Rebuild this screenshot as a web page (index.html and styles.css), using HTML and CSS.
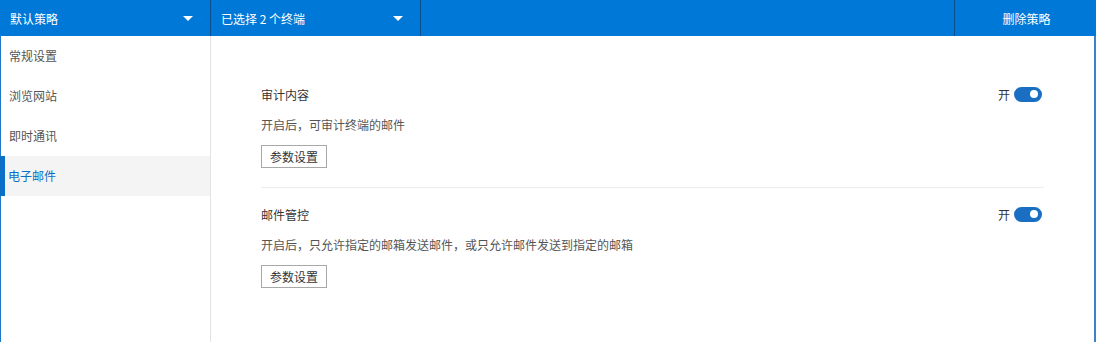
FILE: index.html
```html
<!DOCTYPE html>
<html lang="zh">
<head>
<meta charset="utf-8">
<link rel="stylesheet" href="styles.css">
</head>
<body>
<div class="app">
  <div class="topbar">
    <div class="seg seg-policy"><span>默认策略</span><i class="caret"></i></div>
    <div class="seg seg-terminal"><span>已选择 2 个终端</span><i class="caret"></i></div>
    <div class="spacer"></div>
    <div class="seg seg-delete">删除策略</div>
  </div>
  <div class="main">
    <ul class="sidebar">
      <li class="nav-item">常规设置</li>
      <li class="nav-item">浏览网站</li>
      <li class="nav-item">即时通讯</li>
      <li class="nav-item active">电子邮件</li>
    </ul>
    <div class="content">
      <div class="section">
        <div class="row">
          <span class="title">审计内容</span>
          <span class="switch-wrap">开<span class="switch"><span class="knob"></span></span></span>
        </div>
        <p class="desc">开启后，可审计终端的邮件</p>
        <button class="btn">参数设置</button>
      </div>
      <div class="section">
        <div class="row">
          <span class="title">邮件管控</span>
          <span class="switch-wrap">开<span class="switch"><span class="knob"></span></span></span>
        </div>
        <p class="desc">开启后，只允许指定的邮箱发送邮件，或只允许邮件发送到指定的邮箱</p>
        <button class="btn">参数设置</button>
      </div>
    </div>
  </div>
</div>
</body>
</html>
```

FILE: styles.css
```css
* { box-sizing: border-box; }
html, body { margin: 0; padding: 0; background: #fff; }
body {
  font-family: "Microsoft YaHei", "Noto Sans CJK SC", "Noto Sans", sans-serif;
  font-size: 12px;
  color: #333;
}
.app {
  width: 1096px;
  height: 342px;
  display: flex;
  flex-direction: column;
}
.topbar {
  height: 36px;
  background: #0078d7;
  display: flex;
  color: #fff;
}
.seg {
  display: flex;
  align-items: center;
  height: 100%;
}
.seg-policy {
  width: 211px;
  padding: 0 17px 0 10px;
  justify-content: space-between;
  border-right: 1px solid #0b4f8e;
}
.seg-terminal {
  width: 210px;
  padding: 0 17px 0 10px;
  justify-content: space-between;
  border-right: 1px solid #0b4f8e;
}
.spacer { flex: 1; }
.seg-delete {
  width: 142px;
  justify-content: center;
  border-left: 1px solid #0b4f8e;
  padding-left: 2px;
}
.caret {
  width: 0;
  height: 0;
  border-left: 5px solid transparent;
  border-right: 5px solid transparent;
  border-top: 5px solid #fff;
  margin-top: 1px;
}
.main {
  flex: 1;
  display: flex;
  border-left: 1px solid #1f78c8;
  border-right: 2px solid #3b83c6;
}
.sidebar {
  list-style: none;
  margin: 0;
  padding: 0;
  width: 210px;
  border-right: 1px solid #e2e2e2;
}
.nav-item {
  height: 40px;
  line-height: 40px;
  padding-left: 8px;
  color: #555;
}
.nav-item.active {
  background: #f4f4f4;
  color: #0b6fc7;
  border-left: 5px solid #0b6fc7;
  padding-left: 3px;
  margin-left: -1px;
}
.content {
  flex: 1;
  padding: 50px 50px 0 50px;
}
.section {
  padding-bottom: 19px;
}
.section + .section {
  border-top: 1px solid #ececec;
  padding-top: 18px;
}
.row {
  display: flex;
  justify-content: space-between;
  align-items: center;
  height: 16px;
}
.title { color: #333; }
.switch-wrap {
  display: flex;
  align-items: center;
  color: #333;
  margin-right: 2px;
}
.switch {
  display: inline-flex;
  align-items: center;
  justify-content: flex-end;
  width: 28px;
  height: 15px;
  border-radius: 8px;
  background: #1b6fc2;
  margin-left: 4px;
  padding-right: 4px;
}
.knob {
  width: 8px;
  height: 8px;
  border-radius: 50%;
  background: #fff;
}
.desc {
  margin: 15px 0 0;
  line-height: 16px;
  color: #555;
}
.btn {
  display: block;
  margin-top: 12px;
  height: 23px;
  padding: 0 8px;
  font: inherit;
  font-size: 12px;
  color: #333;
  background: #fff;
  border: 1px solid #a8a8a8;
  border-radius: 0;
}
```
